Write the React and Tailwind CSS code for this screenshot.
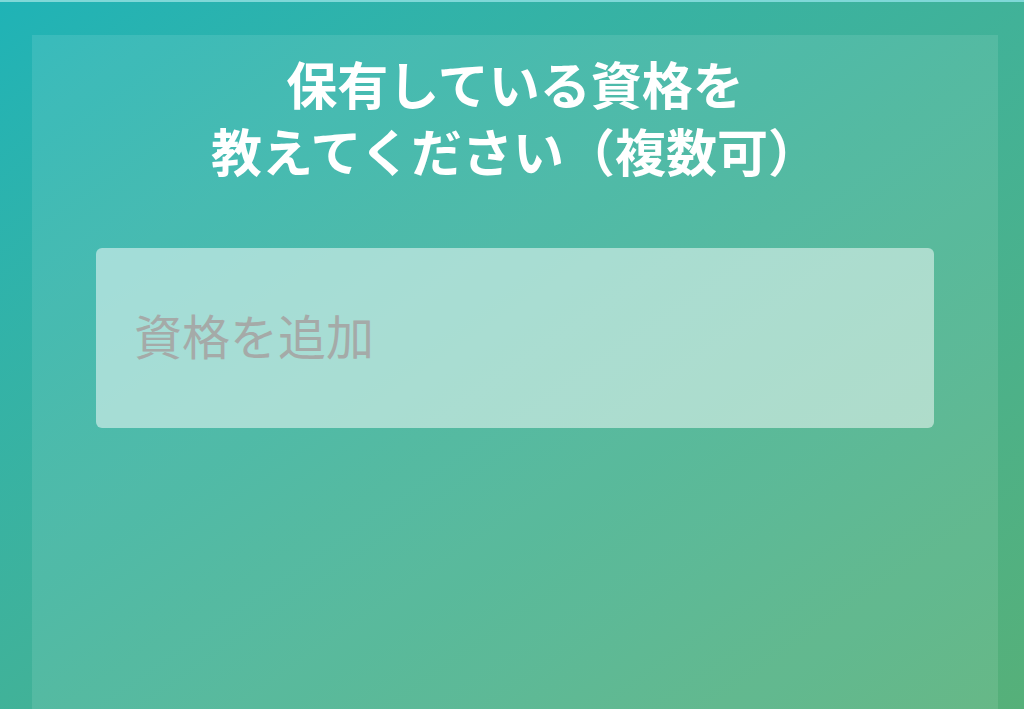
import React, { useState } from 'react';

const App = () => {
  const [qualification, setQualification] = useState('');

  return (
    <div
      className="h-[709px] overflow-hidden border-t-2 border-[#7fd8d8] bg-linear-to-br from-[#1fb3b6] to-[#56b079]"
      style={{ fontFamily: '"Noto Sans CJK JP", "Noto Sans", sans-serif' }}
    >
      <div className="ml-8 mr-[26px] mt-[33px] h-full bg-white/10">
        <h1 className="pt-[15px] text-center text-[51px] font-bold leading-[67px] text-white">
          保有している資格を
          <br />
          教えてください（複数可）
        </h1>

        <div className="mx-[64px] mt-[64px]">
          <input
            type="text"
            value={qualification}
            onChange={(e) => setQualification(e.target.value)}
            placeholder="資格を追加"
            className="block h-[180px] w-full rounded-md bg-white/50 pb-[8px] pl-[38px] text-[48px] text-gray-700 outline-none placeholder:text-[#a5aaa8]"
          />
        </div>
      </div>
    </div>
  );
};

export default App;
